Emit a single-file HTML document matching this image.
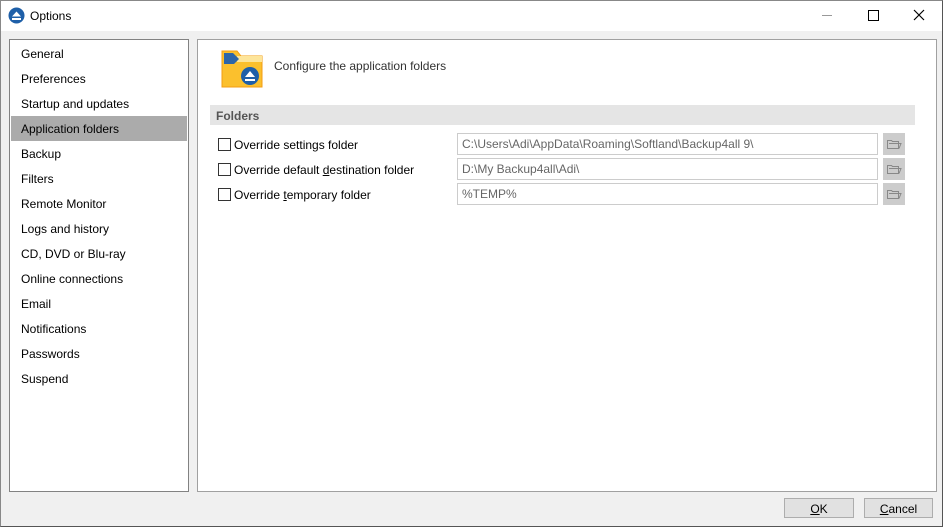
<!DOCTYPE html>
<html><head><style>
body{margin:0;width:943px;height:527px;background:#f0f0f0;font-family:"Liberation Sans",sans-serif;font-size:12px;color:#000;position:relative;overflow:hidden}
.a{position:absolute}
.win{left:0;top:0;width:941px;height:525px;border:1px solid #888;border-right-color:#555;border-bottom-color:#555;background:#f0f0f0}
.tb{left:1px;top:1px;width:941px;height:30px;background:#fff}
.left{left:9px;top:39px;width:178px;height:451px;background:#fff;border:1px solid #828282}
.item{position:absolute;left:11px;height:25px;line-height:26px}
.right{left:197px;top:39px;width:738px;height:451px;background:#fff;border:1px solid #a0a0a0}
.cb{position:absolute;width:11px;height:11px;border:1px solid #333;background:#fff}
.in{position:absolute;left:457px;border:1px solid #ccc;line-height:21px;color:#666;padding-left:4px;box-sizing:border-box;width:421px;height:22px}
.fb{position:absolute;left:883px;width:22px;height:22px;background:#ccc}
.btn{position:absolute;top:498px;height:20px;background:#e1e1e1;border:1px solid #adadad;text-align:center;line-height:20px;box-sizing:border-box}
</style></head><body>
<div class="a win"></div>
<div class="a tb"></div>
<svg class="a" style="left:8px;top:7px" width="17" height="17"><circle cx="8.5" cy="8.5" r="8" fill="#1e5fa8"/><path d="M4 9.5 L8.5 4.5 L13 9.5Z M4 11h9v2h-9z" fill="#fff"/></svg>
<div class="a" style="left:30px;top:9px">Options</div>
<div class="a" style="left:822px;top:15px;width:10px;height:1px;background:#999"></div>
<div class="a" style="left:868px;top:10px;width:9px;height:9px;border:1px solid #000"></div>
<svg class="a" style="left:913px;top:9px" width="12" height="12"><path d="M1 1L11 11M11 1L1 11" stroke="#000" stroke-width="1.2"/></svg>
<div class="a left">
<div class="a" style="left:1px;top:76px;width:176px;height:25px;background:#ababab"></div>
<div class="item" style="top:1px">General</div>
<div class="item" style="top:26px">Preferences</div>
<div class="item" style="top:51px">Startup and updates</div>
<div class="item" style="top:76px">Application folders</div>
<div class="item" style="top:101px">Backup</div>
<div class="item" style="top:126px">Filters</div>
<div class="item" style="top:151px">Remote Monitor</div>
<div class="item" style="top:176px">Logs and history</div>
<div class="item" style="top:201px">CD, DVD or Blu-ray</div>
<div class="item" style="top:226px">Online connections</div>
<div class="item" style="top:251px">Email</div>
<div class="item" style="top:276px">Notifications</div>
<div class="item" style="top:301px">Passwords</div>
<div class="item" style="top:326px">Suspend</div>
</div>
<div class="a right"></div>
<svg class="a" style="left:221px;top:49px" width="42" height="40"><path d="M1 2h15l4 5h21v31h-40z" fill="#fbc02d" stroke="#f39c12"/><path d="M16 7h25v6h-25z" fill="#fde59a"/><path d="M3 4h9l6 6-5 5h-10z" fill="#2d65a8"/><circle cx="29" cy="27" r="9" fill="#1e5fa8"/><path d="M24 28l5-6 5 6z M24 30h10v2h-10z" fill="#fff"/></svg>
<div class="a" style="left:274px;top:59px;color:#333">Configure the application folders</div>
<div class="a" style="left:210px;top:105px;width:705px;height:20px;background:#e5e5e5"></div>
<div class="a" style="left:216px;top:109px;font-weight:bold;color:#555">Folders</div>
<div class="cb" style="left:218px;top:138px"></div><div class="a" style="left:234px;top:138px">Override settings folder</div>
<div class="cb" style="left:218px;top:163px"></div><div class="a" style="left:234px;top:163px">Override default <u>d</u>estination folder</div>
<div class="cb" style="left:218px;top:188px"></div><div class="a" style="left:234px;top:188px">Override <u>t</u>emporary folder</div>
<div class="in" style="top:133px">C:\Users\Adi\AppData\Roaming\Softland\Backup4all 9\</div>
<div class="in" style="top:158px">D:\My Backup4all\Adi\</div>
<div class="in" style="top:183px">%TEMP%</div>
<div class="fb" style="top:133px"></div><div class="fb" style="top:158px"></div><div class="fb" style="top:183px"></div>
<svg class="a" style="left:886px;top:137px" width="16" height="90"><g fill="none" stroke="#888"><path d="M1.5 3.5h4l1 1h6v7h-11z M3 6.5h12l-2 5"/><path transform="translate(0,25)" d="M1.5 3.5h4l1 1h6v7h-11z M3 6.5h12l-2 5"/><path transform="translate(0,50)" d="M1.5 3.5h4l1 1h6v7h-11z M3 6.5h12l-2 5"/></g></svg>
<div class="btn" style="left:784px;width:70px"><u>O</u>K</div>
<div class="btn" style="left:864px;width:69px"><u>C</u>ancel</div>
</body></html>
